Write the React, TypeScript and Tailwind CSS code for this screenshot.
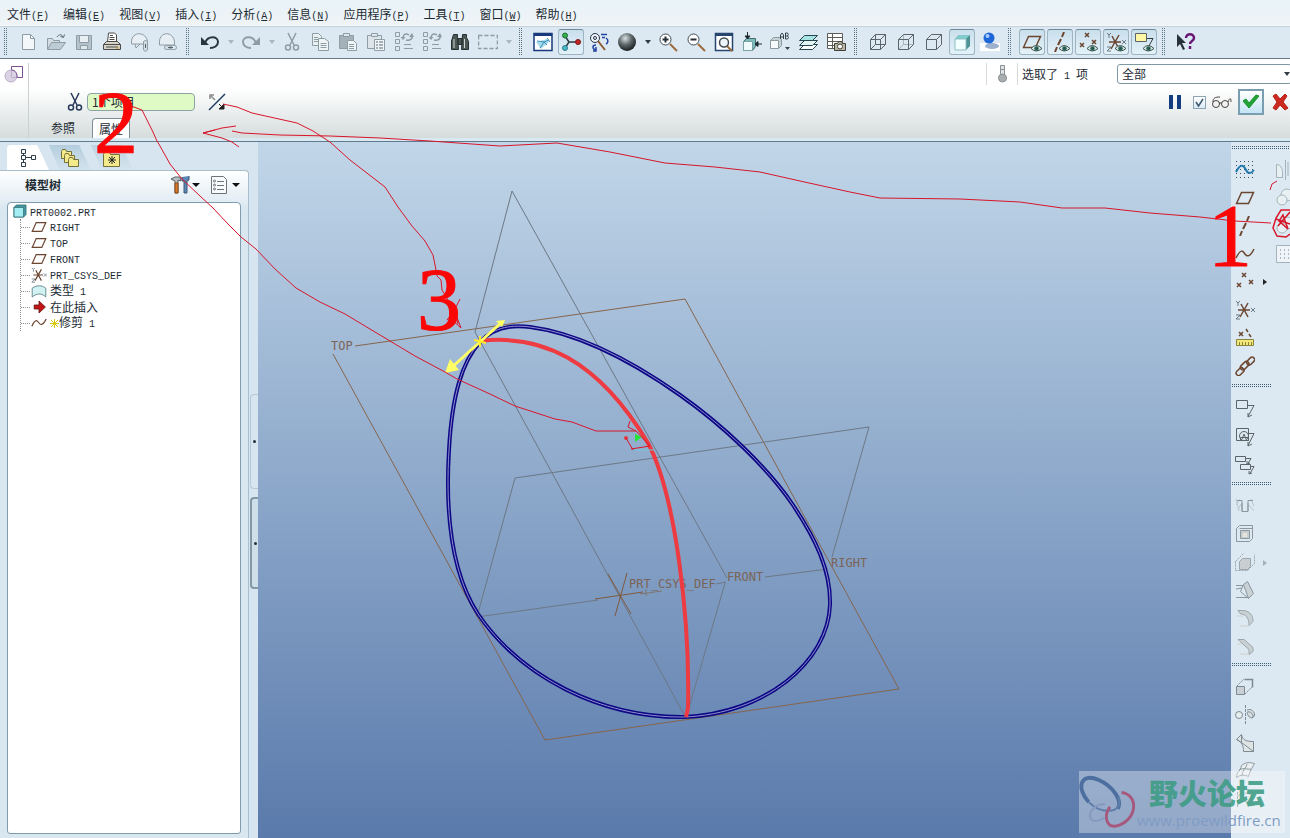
import type { ReactNode } from 'react'
import clsx from 'clsx'

const LINE = '#5b6468'
const BROWN = '#6b4630'
const GREY = '#8e9ca4'

// latin runs are half as wide as the CJK glyphs, like the system's bitmap font
function Mixed({ text }: { text: string }) {
  return (
    <span className="whitespace-pre">
      {text.split(/([\x20-\x7e]+)/).map((part, i) =>
        i % 2 ? <span key={i} className="font-['Liberation_Mono','DejaVu_Sans_Mono',monospace] text-[10px]">{part}</span> : part
      )}
    </span>
  )
}

function Icon({ children, color = LINE, fill = 'none', size = 'size-5' }: { children: ReactNode; color?: string; fill?: string; size?: string }) {
  return (
    <svg viewBox="0 0 20 20" className={clsx(size, 'shrink-0')} fill={fill} stroke={color} strokeWidth="1" aria-hidden="true">
      {children}
    </svg>
  )
}

function Tool({ label, pressed, children }: { label: string; pressed?: boolean; children: ReactNode }) {
  return (
    <button
      type="button"
      aria-label={label}
      aria-pressed={pressed}
      className={clsx(
        'mx-px flex size-[26px] shrink-0 items-center justify-center rounded-[3px]',
        pressed && 'border border-[#9db4c2] border-t-[#6f8a99] bg-linear-to-b from-[#c9dfec] to-[#e4f1f8]'
      )}
    >
      {children}
    </button>
  )
}

function Grip() {
  return (
    <div className="w-3.5 shrink-0 pl-1">
      <div className="h-7 w-[3px] bg-[conic-gradient(transparent_75%,#5b7280_75%)] bg-size-[2px_2px]" />
    </div>
  )
}

function HGrip({ wide }: { wide?: boolean }) {
  return (
    <div className="h-3.5 pt-1 pl-px">
      <div className={clsx('h-[3px] bg-[conic-gradient(transparent_75%,#3f5c70_75%)] bg-size-[2px_2px]', wide ? 'w-full' : 'w-10')} />
    </div>
  )
}

function Drop({ label, dark }: { label: string; dark?: boolean }) {
  return (
    <button type="button" aria-label={label} className="flex h-[26px] w-[13px] shrink-0 items-center justify-center">
      <svg viewBox="0 0 6 4" className="h-1 w-1.5"><path d="M0 0h6L3 4z" fill={dark ? '#2f3d46' : '#a9b7c0'} /></svg>
    </button>
  )
}

const Doc = () => <Icon color={GREY}><path d="M4.500 2.500h8l4 4v11h-12z" fill="#f3f7f9" /><path d="M12.500 2.500v4h4" /></Icon>
const Open = () => <Icon color={GREY}><path d="M1.500 17V6.500h5l1 2h6V11" fill="#d3dde3" /><path d="M1.500 17.500l4-7h14l-5 7z" fill="#bccbd4" /><path d="M11 5c2-3 5-3 6 0M14.500 4.500l3 1 1-3" stroke="#5d6c75" /></Icon>
const Save = () => <Icon color={GREY}><path d="M2.500 3.500h15v14h-15z" fill="#b4c2cb" /><path d="M5.500 3.500h9v7h-9z" fill="#e8eff3" /><path d="M6.500 13.500h7v4h-7z" fill="#dfe8ed" /></Icon>
const Printer = () => (
  <Icon color="#4c4a48">
    <path d="M5.500 10l1-9h6l2 2v7" fill="#fff" />
    <path d="M8 3.500h3M7.500 5.500h5M7.500 7.500h5" />
    <path d="M1.500 12.500l3-3h11l3 3v5h-17z" fill="#d8d3c8" />
    <path d="M1.500 12.500h17M4 15h12" />
    <path d="M14 16h3" stroke="#c59a27" />
  </Icon>
)
const MailClip = () => <Icon color={GREY}><path d="M1.500 10c0-11 15-11 16 0v2h-16z" fill="#e8eff4" /><path d="M5 12l1 4 4-4" /><path d="M13.500 17v-7c0-2 4-2 4 0v7c0 3-4 3-4 0z" fill="#d3dce2" /><path d="M15.500 12v4" stroke="#56646d" /></Icon>
const MailLink = () => <Icon color={GREY}><path d="M1.500 10c0-11 14-11 15 0v3h-15z" fill="#e8eff4" /><rect x="6.500" y="13.500" width="7" height="4" rx="2" fill="#d3dce2" /><rect x="11.500" y="13.500" width="7" height="4" rx="2" /><path d="M10 15.500h5" stroke="#56646d" /></Icon>
const Undo = () => <Icon color="#27363f"><path d="M5 11c3-8 13-7 13-1 0 4-4 6-8 6" strokeWidth="2" /><path d="M1 5v8h8z" fill="#27363f" stroke="none" /></Icon>
const Redo = () => <Icon color={GREY}><path d="M15 11c-3-8-13-7-13-1 0 4 4 6 8 6" strokeWidth="2" /><path d="M19 5v8h-8z" fill={GREY} stroke="none" /></Icon>
const Scissors = ({ color = GREY }: { color?: string }) => (
  <Icon color={color}><path d="M6 1l6 12M14 1L8 13" strokeWidth="1.500" /><circle cx="6" cy="15.500" r="2.500" strokeWidth="1.500" /><circle cx="14" cy="15.500" r="2.500" strokeWidth="1.500" /></Icon>
)
const Copy = () => <Icon color={GREY}><path d="M2.500 1.500h6l3 3v9h-9z" fill="#e9f0f4" /><path d="M4 5.500h4M4 7.500h4M4 9.500h4" /><path d="M8.500 6.500h6l4 3v9h-10z" fill="#eff4f7" /><path d="M10.500 11.500h6M10.500 13.500h6M10.500 15.500h6" /></Icon>
const Paste = () => <Icon color={GREY}><path d="M1.500 3.500h14v13h-14z" fill="#a4b1b9" /><path d="M5.500 1.500h6v3h-6z" fill="#dfe7eb" /><path d="M9.500 8.500h6l3 3v7h-9z" fill="#eff4f7" /><path d="M11 12.500h5M11 14.500h5M11 16.500h5" /></Icon>
const PasteList = () => <Icon color={GREY}><path d="M1.500 3.500h14v13h-14z" fill="#dde5ea" /><path d="M5.500 1.500h6v3h-6z" fill="#dfe7eb" /><path d="M8.500 7.500h10v11h-10z" fill="#eff4f7" /><path d="M10 10h2m1 0h4m-7 3h2m1 0h4m-7 3h2m1 0h4" strokeWidth="1.500" /></Icon>
const Regen = () => (
  <Icon color={GREY}>
    <path d="M1.500 .5h4v4h-4zM1.500 7.500h4v4h-4zM1.500 14.500h4v4h-4zM10 12.500h7M10 16.500h9" />
    <path d="M9 6c0-4 3-5 6-3M18 3c1 4-2 6-6 5" strokeWidth="1.500" />
    <path d="M6.500 5h5l-2.500 3zM15 5h5l-2-4z" fill={GREY} stroke="none" />
  </Icon>
)
const Binoculars = () => <Icon color="#26302f" fill="#4c5856"><path d="M3.500 2.500h4v3l1 12h-7V9zM12.500 2.500h4v3l2 4v8h-7zM8 6.500h4v6H8z" /><path d="M4 7v9M14.500 7v9" stroke="#cfd6d4" /></Icon>
const SelectBox = () => <Icon color={GREY}><path d="M.5 3.500h19v13H.5z" strokeWidth="1.500" strokeDasharray="4 2" /></Icon>
const Repaint = () => <Icon color="#163a7c"><path d="M1 1.500h18v17H1z" fill="#fff" strokeWidth="1.500" /><path d="M1 2.500h18" strokeWidth="3" /><path d="M3 10l11-3 2 3-8 7z" fill="#a8dcea" stroke="none" /><path d="M4 9l7 1 3 3M7 16l4-6 5-2M14 6l3 4" stroke="#3c8fb8" /></Icon>
const Spin = () => (
  <Icon color="#2a3a40">
    <path d="M4 4l4 6-4 6M8 10h9" strokeWidth="1.500" />
    <circle cx="4" cy="3.500" r="2.500" fill="#35b04e" stroke="#1c7030" /><circle cx="4" cy="16" r="2.500" fill="#4bb7c5" stroke="#2a7f8c" /><circle cx="17" cy="10" r="2.500" fill="#c32727" stroke="#7c1414" />
  </Icon>
)
const Orient = () => <Icon color="#27304b"><circle cx="6" cy="6" r="4.500" fill="#eef4f8" /><circle cx="6" cy="6" r="1.500" /><path d="M9 9l7 9" stroke="#8d5b32" strokeWidth="2" /><path d="M12 2.500h6M13 5.500h3M17 6c3 2 2 5 0 6M7 13c-4 0-4 4 0 5M7 15v4H4" stroke="#2544a3" strokeWidth="1.500" /></Icon>
const Sphere = () => (
  <Icon>
    <defs><radialGradient id="ball" cx="40%" cy="30%" r="70%"><stop offset="0" stopColor="#d9e1e3" /><stop offset=".5" stopColor="#60696c" /><stop offset="1" stopColor="#1b1f21" /></radialGradient></defs>
    <circle cx="10" cy="10" r="9" fill="url(#ball)" stroke="none" />
  </Icon>
)
const Zoom = ({ plus }: { plus?: boolean }) => <Icon color="#3f4a52"><path d="M12 12l7 7" stroke="#9c6a3c" strokeWidth="2" /><circle cx="7.500" cy="7.500" r="5.500" fill="#fff" /><path d={plus ? 'M4.500 7.500h6M7.500 4.500v6' : 'M4.500 7.500h6'} strokeWidth="2" stroke="#262f38" /></Icon>
const Refit = () => <Icon color="#27456f"><path d="M1.500 1.500h17v17h-17z" fill="#fff" strokeWidth="1.500" /><path d="M1 2.500h18" strokeWidth="3" /><path d="M13 14l5 5" stroke="#9c6a3c" strokeWidth="2" /><circle cx="10" cy="10.500" r="4.500" fill="#eef4f8" stroke="#3f4a52" strokeWidth="1.500" /></Icon>
const Reorient = () => <Icon color="#1f2a30"><path d="M1.500 9.500l3-3h9v8l-3 4h-9z" fill="#7cbcbc" stroke="#456c70" /><path d="M1.500 9.500h9v9h-9z" fill="#effafa" stroke="#7aa0a4" /><path d="M5.500 0v6M3 4l2.500 3L8 4zM20 12h-6M16 9.500L13 12l3 2.500z" fill="#1f2a30" /></Icon>
const Saved = () => (
  <Icon color="#8d9ba0">
    <path d="M.5 8.500l3-3h8v8l-3 3h-8z" fill="#c2d2d5" /><path d="M.5 8.500h8v8h-8z" fill="#f7fbfb" />
    <path d="M10.500 7V3l1.500-2 1.500 2v4m-3-2h3M15.500 1v6h2q2-1.500 0-3 1.500-1.500 0-3zm0 3h2" stroke="#33424a" fill="#dce9f2" /><path d="M15 15h5l-2.500 3z" fill="#33424a" stroke="none" />
  </Icon>
)
const Layers = () => <Icon color="#23454d"><path d="M1.500 17.500l5-5h13l-5 5z" fill="#fff" /><path d="M1.500 13.500l5-5h13l-5 5z" fill="#e2f4f4" /><path d="M1.500 8.500l5-5h13l-5 5z" fill="#a7e3e4" /></Icon>
const ViewMgr = () => <Icon color="#5d5d58"><path d="M1.500 1.500h15v15h-15z" fill="#fff" /><path d="M1.500 5.500h15M6.500 1.500v15M1.500 9.500h15M1.500 13.500h15" /><path d="M8.500 11.500h3l1-2h3l1 2h3v7h-11z" fill="#b7b5a4" stroke="#3f3f38" /><circle cx="14" cy="14.500" r="2.500" fill="#fff" stroke="#3f3f38" /></Icon>
const Wire = ({ inner = LINE }: { inner?: string }) => <Icon><path d="M7.500 2.500v10h10M7.500 12.500l-5 5" stroke={inner} /><path d="M2.500 7.500h10v10h-10zM2.500 7.500l5-5h10v10l-5 5M12.500 7.500l5-5" /></Icon>
const Shaded = () => <Icon color="none"><path d="M3 7l4-4h11v11l-4 4z" fill="#4f9296" /><path d="M3 7l4-4h11l-4 4z" fill="#7fcbcd" /><path d="M3 7h11v11H3z" fill="#f2ffff" stroke="#8cbfc2" /></Icon>
const BlueBall = () => <Icon color="none"><path d="M0 11h20v8H0z" fill="#fff" /><ellipse cx="12" cy="14" rx="7" ry="3" fill="#9db1cf" /><circle cx="9" cy="6" r="5.500" fill="#1f67d8" /><circle cx="7.500" cy="4" r="2" fill="#a9ccff" /></Icon>
const Eye = () => <g><path d="M9 16.500q5-6 11 0-6 5-11 0z" fill="#d5e8e2" stroke="#40544f" /><circle cx="14.500" cy="16.500" r="2.200" fill="#285c55" stroke="none" /></g>
const Plane = ({ eye, size }: { eye?: boolean; size?: string }) => <Icon color={BROWN} size={size}><path d="M1.500 15.500l5-11h12l-5 11z" strokeWidth="1.500" />{eye && <Eye />}</Icon>
const Axis = ({ eye }: { eye?: boolean }) => <Icon color={BROWN}><path d="M14 0l-2 5M11 7l-3 6M7 15l-2 5" strokeWidth="2" />{eye && <Eye />}</Icon>
const Points = ({ eye }: { eye?: boolean }) => <Icon color={BROWN}><path d="M7 1l4 4m0-4L7 5M2 11l4 4m0-4l-4 4M14 8l4 4m0-4l-4 4" strokeWidth="1.500" />{eye && <Eye />}</Icon>
const Csys = ({ eye, size }: { eye?: boolean; size?: string }) => (
  <Icon color={BROWN} size={size}>
    <path d="M3 10h12M6 4l7 13M13 3L5 17" strokeWidth="1.500" />
    <path d="M1 1l2 2 2-2M3 3v3M1 15h4l-4 4h4M16 8l4 4m0-4l-4 4" stroke="#6c7c86" />{eye && <Eye />}
  </Icon>
)
const Note = ({ eye }: { eye?: boolean }) => <Icon><path d="M1.500 1.500h11v8h-11z" fill={eye ? '#fdf6a5' : 'none'} /><path d="M13 6.500h6l-6 11M13 14v4l4-2" stroke={eye ? '#303a40' : LINE} />{eye && <Eye />}</Icon>
const Help = () => <Icon color="none"><path d="M1 2v13l3-3 3 6 2-1-3-6h4z" fill="#27313a" /><path d="M10 6c0-5 8-5 8 0 0 3-4 3-4 6M14 14v3" stroke="#6a1675" strokeWidth="2.500" /></Icon>
const Wave = ({ size }: { size?: string }) => <Icon color={BROWN} size={size}><path d="M1 14c5-10 7-7 9-4s5 3 9-5" strokeWidth="1.500" /></Icon>
const Sketch = () => <Icon color="#2379ad"><path d="M1 1.500h18M1 5.500h18M1 9.500h18M1 13.500h18M1 17.500h18" stroke="#3b4c58" strokeDasharray="1 3" /><path d="M1 12c5-10 8-6 10-2s5 4 8 0" strokeWidth="2" /></Icon>
const Ruler = () => <Icon color={BROWN}><path d="M4 4l4 4m0-4L4 8M11 1l2 3M14 6l2 3" strokeWidth="1.500" /><path d="M1.500 11.500h17v6h-17z" fill="#f1e87a" stroke="#8b8439" /><path d="M4.500 17v-3m3 3v-3m3 3v-3m3 3v-3m3 3v-3" stroke="#8b8439" /></Icon>
const Chain = () => <Icon color={BROWN}><g transform="rotate(-45 10 10)" strokeWidth="1.500"><rect x="-2" y="8" width="9" height="5" rx="2.500" /><rect x="5" y="7" width="10" height="5" rx="2.500" /><rect x="13" y="8" width="9" height="5" rx="2.500" /></g></Icon>

const Stamp = () => <Icon><path d="M1.500 1.500h12v12h-12z" /><circle cx="9" cy="9" r="4.500" /><path d="M7 12l2-5 2 5M5.500 10.500h8v3h-8zM14 6.500h5l-6 12M13 15v4l4-2" /></Icon>
const Notes = () => <Icon><path d="M.5 1.500h10v5h-10zM5.500 9.500h10v5h-10zM11 3.500h5l-3 5M12 6v3l3-1M16 11.500h3l-4 7M14 16v3l3-1" /></Icon>
const Hole = () => <Icon color="#8c979d"><path d="M1 3l3 12M1 9l4-6M3 14l3-6M16 3l3 7M14 9l5 6" stroke="#bbc6cc" /><path d="M2 4.500h5v11h6v-11h5M7 15.500V7m6 8V7" /></Icon>
const Shell = () => <Icon color="#8c979d"><path d="M1.500 4.500l3-3h13v13l-3 3h-13zM4.500 4.500h13" /><path d="M5.500 6.500h9v8h-9z" fill="#c7cfd3" /><path d="M8 9h4v4H8z" fill="#e6e3da" stroke="none" /></Icon>
const Rib = () => <Icon color="#9ba7ad"><path d="M.5 9.500l8-8M.5 9.500v9h12v-9M12.500 18.500l7-7v-9" strokeDasharray="2 1" /><path d="M4.500 9.500l3-3h8v8l-3 3h-8z" fill="#c8ced1" /></Icon>
const Draft = () => <Icon color="#8c979d"><path d="M1 5.500h7M1 17.500h12M1 9l6-1" /><path d="M8.500 4.500l4-3 6 12-5 5z" fill="#c9d1d5" /><path d="M8.500 4.500l-3 7 8 7" /></Icon>
const Round = () => <Icon color="#9ba7ad"><path d="M3 2.500h4c8 0 11 5 11 11l-4 4c0-8-3-11-9-12z" fill="#c9d1d5" /><path d="M2 8h6m6 10H5" stroke="#d3cec6" /></Icon>
const Chamfer = () => <Icon color="#9ba7ad"><path d="M3 3.500h6l9 8v4l-4 3v-5l-9-8z" fill="#c9d1d5" /><path d="M2 8h4m8 10H5" stroke="#d3cec6" /></Icon>
const Extrude = () => <Icon color="#7f8b92"><path d="M1.500 9.500h8v8h-8z" fill="#c9cfd2" /><path d="M2 9l7-7M10 17l7-7" strokeDasharray="2 1" /><path d="M9.500 2.500h8v8" strokeWidth="1.500" /></Icon>
const Revolve = () => <Icon color="#7f8b92"><circle cx="4" cy="10" r="3.500" fill="#e7ecee" /><path d="M10.500 0v20" strokeDasharray="3 1" /><path d="M12 5c4-2 8 2 7.500 5s-4 4-6 1-2-5 1-4 4 3 3 6" fill="#d6dde0" /></Icon>
const Sweep = () => <Icon color="#7f8b92"><path d="M1.500 6.500l5-5c1 6 5 7 12 7v10h-10c0-6-2-10-7-12z" fill="#dfe4e5" /><path d="M6.500 1.500v8l12 9M1.500 6.500l5 3" /></Icon>
const Blend = () => <Icon color="#8c979d"><path d="M1.500 16.500c0-6 4-6 5-12 5-4 8-3 13-2-3 6-4 6-6 13-4-2-8-2-12 1z" fill="#e9eff1" /><path d="M4 9c5-3 8 0 12-1M7 15c0-6 4-7 5-12" /></Icon>
const Boundary = () => <Icon color="#8c979d"><path d="M2.500 3v15M2 16c5-5 9-5 15 1M3 7c5-4 9-4 14 0v10" strokeDasharray="3 1" /></Icon>
const Mirror = () => <Icon color="#a4b3bb"><path d="M2.500 17.500v-13c4 0 6 4 6 8v5zM11.500 0v20M14 2v14" fill="#e8f0f4" /></Icon>
const Merge = () => <Icon color="#a4b3bb"><circle cx="13" cy="7" r="6" fill="#e8f0f4" /><circle cx="8" cy="12" r="5" fill="#e8f0f4" /></Icon>
const Pattern = () => <Icon color="#a4b3bb"><path d="M2.500 1.500h18v17h-18z" fill="#eef4f7" /><path d="M6 6h14M6 10h14M6 14h14" stroke="#6d7f89" strokeDasharray="1 3" /></Icon>

const MENUS = [['文件', 'F'], ['编辑', 'E'], ['视图', 'V'], ['插入', 'I'], ['分析', 'A'], ['信息', 'N'], ['应用程序', 'P'], ['工具', 'T'], ['窗口', 'W'], ['帮助', 'H']]

function MenuBar() {
  return (
    <nav className="flex h-[26px] items-center gap-3.5 border-b border-[#f6fafc] bg-linear-to-b from-[#e8f3f8] to-[#eff3f6] pt-1.5 pl-[7px]">
      {MENUS.map(([name, key]) => (
        <button key={key} type="button" className="flex items-baseline whitespace-nowrap leading-4">
          {name}
          <span className="font-['Liberation_Mono',monospace] text-[10px]">(<u>{key}</u>)</span>
        </button>
      ))}
    </nav>
  )
}

function MainToolbar() {
  return (
    <div role="toolbar" aria-label="主工具栏" className="flex h-[33px] items-center border-b border-[#667b89] border-t border-t-[#c2d0d9] bg-[#dce9f2] pb-px">
      <Grip />
      <Tool label="新建"><Doc /></Tool>
      <Tool label="打开"><Open /></Tool>
      <Tool label="保存"><Save /></Tool>
      <Tool label="打印"><Printer /></Tool>
      <Tool label="发送附件"><MailClip /></Tool>
      <Tool label="发送链接"><MailLink /></Tool>
      <Grip />
      <Tool label="撤消"><Undo /></Tool>
      <Drop label="撤消列表" />
      <Tool label="重做"><Redo /></Tool>
      <Drop label="重做列表" />
      <Tool label="剪切"><Scissors /></Tool>
      <Tool label="复制"><Copy /></Tool>
      <Tool label="粘贴"><Paste /></Tool>
      <Tool label="选择性粘贴"><PasteList /></Tool>
      <Tool label="再生"><Regen /></Tool>
      <Tool label="再生管理器"><Regen /></Tool>
      <Tool label="查找"><Binoculars /></Tool>
      <Tool label="框选"><SelectBox /></Tool>
      <Drop label="框选列表" />
      <Grip />
      <Tool label="重画"><Repaint /></Tool>
      <Tool label="旋转中心" pressed><Spin /></Tool>
      <Tool label="定向模式"><Orient /></Tool>
      <Tool label="外观"><Sphere /></Tool>
      <Drop label="外观列表" dark />
      <Tool label="放大"><Zoom plus /></Tool>
      <Tool label="缩小"><Zoom /></Tool>
      <Tool label="重新调整"><Refit /></Tool>
      <Tool label="重定向"><Reorient /></Tool>
      <Tool label="已保存视图"><Saved /></Tool>
      <Tool label="层"><Layers /></Tool>
      <Tool label="视图管理器"><ViewMgr /></Tool>
      <Grip />
      <Tool label="线框"><Wire /></Tool>
      <Tool label="隐藏线"><Wire inner="#a9b4ba" /></Tool>
      <Tool label="消隐"><Wire inner="none" /></Tool>
      <Tool label="着色" pressed><Shaded /></Tool>
      <Tool label="增强真实感"><BlueBall /></Tool>
      <Grip />
      <Tool label="平面显示" pressed><Plane eye /></Tool>
      <Tool label="轴显示" pressed><Axis eye /></Tool>
      <Tool label="点显示" pressed><Points eye /></Tool>
      <Tool label="坐标系显示" pressed><Csys eye /></Tool>
      <Tool label="注释显示" pressed><Note eye /></Tool>
      <Grip />
      <Tool label="上下文帮助"><Help /></Tool>
    </div>
  )
}

function Dashboard() {
  return (
    <div className="flex h-[83px] justify-between border-b border-[#5f7b8c] bg-linear-to-b from-white from-35% to-[#d3dada] shadow-[inset_0_-3px_0_#d8e9f1]">
      <div className="flex">
        <div className="my-1 w-[29px] border-r border-[#c9cfd3] pt-0.5 pl-1">
          <Icon color="#7d4c93"><path d="M7.500 1.500h11v11h-11z" /><circle cx="7" cy="11" r="6" fill="#cfc8dc" fillOpacity=".8" stroke="#b7aeca" /><path d="M7.500 5c4 0 6 4 5.500 7.500" /></Icon>
        </div>
        <div className="flex flex-col gap-1.5 pt-[33px]">
          <div className="flex h-5 items-center">
            <label htmlFor="trim" aria-label="修剪曲线" className="ml-9"><Scissors color="#27395a" /></label>
            <input id="trim" defaultValue="1个项目" className="ml-0.5 h-[18px] w-[108px] rounded-[4px] border border-[#8ca3a6] bg-[#e0fac5] px-1 text-[12px] outline-none" />
            <button type="button" aria-label="反向" className="ml-3"><Icon color="#1d3a63"><path d="M2 18L18 2" strokeWidth="1.500" /><path d="M8 8L4 4M3 7V3h4" stroke="#8b8b8b" strokeWidth="1.500" /><path d="M12 12l3 3M17 12v5h-5z" fill="#222" stroke="#222" /></Icon></button>
          </div>
          <div className="flex h-5 gap-3 pl-[17px] text-[12px]">
            <button type="button" className="w-[34px] whitespace-nowrap">参照</button>
            <button type="button" className="w-[38px] rounded-t-[4px] border border-b-0 border-[#7b8f97] bg-white whitespace-nowrap">属性</button>
          </div>
        </div>
      </div>
      <div className="flex flex-col">
        <div className="flex h-[30px] items-center">
          <div className="flex h-[22px] w-8 items-center justify-center border-x border-[#d5dadd]">
            <Icon color="#8b9094"><path d="M8.500 1.500h4v4h-4zM8.500 5.500h4v5h-4z" fill="#dfe3e5" /><circle cx="10.500" cy="14" r="4" fill="#a9aeb1" /></Icon>
          </div>
          <label htmlFor="filter" className="ml-1 w-[95px]"><Mixed text="选取了 1 项" /></label>
          <select id="filter" className="h-5 w-[175px] appearance-none rounded-[3px] border border-[#7f98a6] bg-white px-1 text-[12px]">
            <option>全部</option>
          </select>
          <svg viewBox="0 0 6 4" className="-ml-2 h-1 w-1.5" aria-hidden="true"><path d="M0 0h6L3 4z" fill="#2f3d46" /></svg>
        </div>
        <div className="flex h-[26px] items-center justify-end">
          <button type="button" aria-label="暂停" className="flex w-4 gap-1 pl-0.5"><i className="h-3.5 w-1 bg-[#143c80]" /><i className="h-3.5 w-1 bg-[#143c80]" /></button>
          <input type="checkbox" defaultChecked aria-label="预览" className="ml-2.5 size-[13px] appearance-none border border-[#8ea5b3] bg-[linear-gradient(#fff,#dcebf5)]" />
          <svg viewBox="0 0 13 13" className="pointer-events-none mr-1.5 -ml-[13px] size-[13px]" fill="none" aria-hidden="true"><path d="M3 6l2.500 4L10 3" stroke="#3e5a70" strokeWidth="1.500" /></svg>
          <Icon color="#4a4340"><circle cx="4" cy="12" r="3.500" /><circle cx="13" cy="12" r="3.500" /><path d="M7 11h3M1 10c0-4 2-5 7-5M16 10c2-5 3-4 3 0" /></Icon>
          <button type="button" aria-label="确定" className="ml-1.5 flex size-[26px] items-center justify-center border-2 border-[#7b9db0] bg-linear-to-b from-white to-[#c3e3f4]"><Icon color="#17912b"><path d="M2 9l6 7L18 4l-3-1-7 8-3-4z" fill="#21a336" /></Icon></button>
          <button type="button" aria-label="取消" className="ml-1.5 w-5"><Icon color="#b51f16"><path d="M3 4l3-2 4 5 5-5 2 2-4 6 5 6-3 2-5-5-4 5-3-2 4-6z" fill="#cc2a1f" /></Icon></button>
        </div>
      </div>
    </div>
  )
}

const TREE = [
  { icon: <Plane size="size-4" />, text: 'RIGHT' },
  { icon: <Plane size="size-4" />, text: 'TOP' },
  { icon: <Plane size="size-4" />, text: 'FRONT' },
  { icon: <Csys size="size-4" />, text: 'PRT_CSYS_DEF' },
  { icon: <Icon size="size-4" color="#4c777b"><path d="M1.500 17.500V6.500c6-4 12-4 17 0v11c-5-5-11-5-17 0z" fill="#d1f1f2" /></Icon>, text: '类型 1' },
  { icon: <Icon size="size-4" color="#5b1512"><path d="M4 7.500h6v-5l8 7.500-8 7.500v-5H4z" fill="#c41414" /></Icon>, text: '在此插入' },
  { icon: <Wave size="size-4" />, text: '修剪 1', flag: true }
]

function TreePanel() {
  return (
    <aside className="flex w-[258px] shrink-0 bg-[#d6e5ef]">
      <div className="flex min-w-0 flex-1 flex-col pt-[3px]">
        <div role="tablist" className="flex pl-[7px]">
          <button role="tab" aria-selected="true" aria-label="模型树" type="button" className="flex h-[25px] w-[42px] items-center justify-center rounded-tl-[4px] bg-white [clip-path:polygon(0_0,72%_0,100%_100%,0_100%)]">
            <Icon color="#2c3d49"><path d="M3.500 1.500h4v4h-4zM3.500 7.500h4v4h-4zM3.500 14.500h4v4h-4zM13.500 7.500h4v4h-4zM5.500 5.500v2M7.500 9.500h6M5.500 12v2" /></Icon>
          </button>
          <button role="tab" aria-selected="false" aria-label="文件夹" type="button" className="flex h-[25px] w-[42px] items-center justify-center bg-linear-to-b from-[#b4cddd] to-[#d3e3ed] [clip-path:polygon(0_0,72%_0,100%_100%,25%_100%)]">
            <Icon color="#75703a" fill="#f4ea8c"><path d="M1.500 3.500l1-2h3l1 2h5v7h-10z" /><path d="M4.500 7.500l1-2h3l1 2h5v7h-10z" /><path d="M8.500 11.500l1-2h3l1 2h5v7h-10z" /></Icon>
          </button>
          <button role="tab" aria-selected="false" aria-label="收藏夹" type="button" className="flex h-[25px] w-[42px] items-center justify-center bg-linear-to-b from-[#bdd3e1] to-[#d5e4ee] [clip-path:polygon(0_0,72%_0,100%_100%,25%_100%)]">
            <Icon color="#75703a"><path d="M1.500 6.500l1-3h5l1 3h9v12h-16z" fill="#f4ea8c" /><path d="M10 8v8M6 12h8M7 9l6 6m0-6l-6 6" stroke="#222" /></Icon>
          </button>
        </div>
        <div className="flex flex-1 flex-col rounded-tr-[4px] border-t border-r border-[#a9bfcd] bg-linear-to-b from-white to-[#d9e7f0] to-[40px] pb-1 pl-[7px]">
          <div className="flex h-[31px] items-center pb-1">
            <h2 className="w-[163px] pl-[18px] font-bold">模型树</h2>
            <button type="button" aria-label="设置" className="flex w-10 items-center gap-0.5">
              <Icon><path d="M1 4l4-2h5l1 4-3-1v13H5V6z" fill="#b8c0c4" stroke="#566067" /><path d="M5 8h3v10H5z" fill="#d87b2a" stroke="#8a4b18" /><path d="M12 2v4h2v12h3V6l2-1V1" fill="#5d87b5" stroke="#3a5876" /></Icon>
              <svg viewBox="0 0 8 4" className="h-1 w-2"><path d="M0 0h8L4 4z" fill="#111" /></svg>
            </button>
            <button type="button" aria-label="显示" className="flex items-center gap-0.5">
              <Icon color="#6c7478"><path d="M1.500 1.500h12l3 3v14h-15z" fill="#f8fafb" /><circle cx="4.500" cy="6" r="1" /><circle cx="4.500" cy="10" r="1" /><circle cx="4.500" cy="14" r="1" /><path d="M7 6.500h7M7 10.500h7M7 14.500h7" /></Icon>
              <svg viewBox="0 0 8 4" className="h-1 w-2"><path d="M0 0h8L4 4z" fill="#111" /></svg>
            </button>
          </div>
          <div className="mr-[7px] flex-1 rounded-t-[4px] rounded-b-[3px] border border-[#7e9cae] bg-white pl-1">
            <div className="flex h-4 items-center gap-0.5">
              <Icon size="size-4" color="#276b72"><path d="M2.500 5.500l3-3h12v12l-3 3h-12z" fill="#4b9aa2" /><path d="M2.500 5.500h12v12h-12z" fill="#a4edf2" /></Icon>
              <Mixed text="PRT0002.PRT" />
            </div>
            <ul className="ml-2 border-l border-dotted border-[#8c9196]">
              {TREE.map(row => (
                <li key={row.text} className="flex h-4 items-center leading-4">
                  <span className="mr-px w-[9px] border-t border-dotted border-[#8c9196]" />
                  {row.icon}
                  <span className="flex items-center pl-[3px]">
                    {row.flag && <svg viewBox="0 0 9 9" className="size-[9px]" stroke="#d9c80c"><path d="M4.500 0v9M0 4.500h9M1 1l7 7M8 1L1 8" /></svg>}
                    <Mixed text={row.text} />
                  </span>
                </li>
              ))}
            </ul>
          </div>
        </div>
      </div>
      <div className="flex w-[9px] flex-col gap-2 pt-[252px] pl-px">
        <button type="button" aria-label="折叠" className="flex h-[95px] items-center justify-center rounded-l-[4px] border border-r-0 border-[#b8c9d4]"><i className="size-[3px] rounded-full bg-[#22323c]" /></button>
        <button type="button" aria-label="调整宽度" className="flex h-[92px] items-center justify-center rounded-l-[4px] border-2 border-r-0 border-[#8499a6] bg-[#cfdfea]"><i className="size-[3px] rounded-full bg-[#22323c]" /></button>
      </div>
    </aside>
  )
}

const EGG = 'M480 342C492 329 508 324 530 327C585 334 640 367 680 395C724 426 768 468 793 505C815 538 831 570 830 605C828 662 765 714 684 717C600 718 520 676 478 614C448 568 446 500 449 450C452 395 462 362 480 342Z'

function Viewport() {
  return (
    <main className="min-w-0 flex-1 bg-linear-to-b from-[#c1d6e8] to-[#5a7aab]">
      <svg viewBox="258 142 973 696" preserveAspectRatio="xMinYMin slice" className="h-full w-full" fill="none" strokeWidth="1">
        <path d="M355 346L685 299L899 689L545 740L333 354" stroke="#85654d" />
        <path d="M512 191L475 332L686 718L725 583M727 578L512 191" stroke="#6c7885" />
        <path d="M832 557L869 427L515 478L477 617L598 600M716 584L726 582M765 577L828 569" stroke="#6c7885" />
        <path d="M595 599L643 592M608 574L631 614M627 573L615 616" stroke="#80593f" />
        <path d="M640 594L662 591M646 589v7" stroke="#7c7570" />
        <g className="font-['DejaVu_Sans_Mono',monospace] text-[12px]" fill="#7b6457">
          <text x="331" y="350">TOP</text>
          <text x="629" y="588">PRT_CSYS_DEF</text>
          <text x="727" y="581">FRONT</text>
          <text x="831" y="567">RIGHT</text>
        </g>
        <path d={EGG} stroke="#0c0784" strokeWidth="4" />
        <path d={EGG} stroke="#8f8fd0" />
        <path d="M480 341C540 334 597 358 648 443C676 496 690 620 688 708L686 717" stroke="#ee3b41" strokeWidth="4" strokeLinejoin="round" />
        <path d="M450 369L502 322" stroke="#ffff66" strokeWidth="3" />
        <path d="M445 373L450 359L459 370ZM505 320L496 321L502 327Z" fill="#ffff66" />
        <path d="M474 340L486 343M480 336v11" stroke="#ffe92b" strokeWidth="2" />
        <path d="M634 450h20" stroke="#74c7dc" />
        <path d="M635 434L642 437L635 442Z" fill="#25e53b" />
        <circle cx="626" cy="438" r="2" fill="#e33b3f" />
      </svg>
    </main>
  )
}

function FeatureToolbar() {
  return (
    <div role="toolbar" aria-label="特征工具栏" className="w-[59px] shrink-0 overflow-hidden bg-[#dce9f2]">
      <HGrip wide />
      <div className="flex">
        <div className="flex w-7 shrink-0 flex-col gap-0.5 pt-px">
          <Tool label="草绘"><Sketch /></Tool>
          <Tool label="平面"><Plane /></Tool>
          <Tool label="轴"><Axis /></Tool>
          <Tool label="曲线"><Wave /></Tool>
          <Tool label="点"><Points /></Tool>
          <Tool label="坐标系"><Csys /></Tool>
          <Tool label="分析"><Ruler /></Tool>
          <Tool label="参照"><Chain /></Tool>
        </div>
        <button type="button" aria-label="点类型" className="mt-[112px] flex h-7 w-[11px] shrink-0 items-center justify-center"><svg viewBox="0 0 4 6" className="h-1.5 w-1"><path d="M0 0v6l4-3z" fill="#222" /></svg></button>
        <div className="flex w-7 shrink-0 flex-col gap-0.5 pt-px">
          <Tool label="镜像"><Mirror /></Tool>
          <Tool label="合并"><Merge /></Tool>
          <Tool label="修剪"><Merge /></Tool>
          <Tool label="阵列"><Pattern /></Tool>
        </div>
      </div>
      <div className="h-px" />
      <HGrip />
      <div className="flex w-7 flex-col gap-0.5 pt-0.5">
        <Tool label="注释"><Note /></Tool>
        <Tool label="图像注释"><Stamp /></Tool>
        <Tool label="多重注释"><Notes /></Tool>
      </div>
      <HGrip />
      <div className="flex pt-px">
        <div className="flex w-7 flex-col gap-0.5">
          <Tool label="孔"><Hole /></Tool>
          <Tool label="壳"><Shell /></Tool>
          <Tool label="筋"><Rib /></Tool>
          <Tool label="拔模"><Draft /></Tool>
          <Tool label="倒圆角"><Round /></Tool>
          <Tool label="倒角"><Chamfer /></Tool>
        </div>
        <button type="button" aria-label="筋类型" className="mt-14 flex h-7 w-[11px] items-center justify-center"><svg viewBox="0 0 4 6" className="h-1.5 w-1"><path d="M0 0v6l4-3z" fill="#a2b0b8" /></svg></button>
      </div>
      <HGrip />
      <div className="flex w-7 flex-col gap-0.5 pt-px">
        <Tool label="拉伸"><Extrude /></Tool>
        <Tool label="旋转"><Revolve /></Tool>
        <Tool label="扫描"><Sweep /></Tool>
        <Tool label="边界混合"><Blend /></Tool>
        <Tool label="造型"><Boundary /></Tool>
      </div>
    </div>
  )
}

function Watermark() {
  return (
    <div className="absolute right-[5px] bottom-[5px] flex h-[62px] w-[206px] items-center bg-white/35">
      <svg viewBox="0 0 60 62" className="h-[62px] w-[58px] shrink-0" fill="none" opacity=".85">
        <path d="M10 31C-3 17 1 0 20 8C36 15 45 30 40 38" stroke="#3f6598" strokeWidth="4" />
        <path d="M10 31C17 38 27 42 37 39C41 37 43 32 41 26" stroke="#5577a4" strokeWidth="2" />
        <path d="M44 21C63 24 60 51 38 56C27 57 26 44 32 36" stroke="#ab4a70" strokeWidth="3" />
        <path d="M27 33C14 33 7 46 14 50C18 52 22 50 26 47" stroke="#8497bd" strokeWidth="2" />
      </svg>
      <div className="flex flex-col whitespace-nowrap">
        <span className="pl-3 font-['Noto_Sans_CJK_SC',sans-serif] text-[29px] leading-9 font-black text-[#3c9c83]/90">野火论坛</span>
        <span className="font-['Open_Sans','Noto_Sans',sans-serif] text-[15px] leading-5 text-[#7f9cc4]">www.proewildfire.cn</span>
      </div>
    </div>
  )
}

// freehand marker strokes and step numbers on top of the whole window
function Markup() {
  return (
    <svg viewBox="0 0 1290 838" className="pointer-events-none absolute top-0 left-0 h-[838px] w-[1290px]" fill="none" stroke="#d8162a">
      <path d="M1271 223L1235 221L1200 217L1150 213L1105 208L1062 208L1020 202L960 199L880 198L850 192L800 181L760 172L715 167L665 163L610 152L557 143L500 146L430 141L380 138L330 136L280 135L242 133L232 131" />
      <path d="M236 126L222 128L203 133L222 138L232 142L239 147M203 133L215 130" />
      <path d="M131 106L142 110L152 130L157 141L160 146L170 164L182 179L200 196L213 208L228 224L241 237L256 249L275 269L296 288L320 302L345 314L370 329L395 344L415 356L445 372L457 379L490 394L515 406L555 419L572 422L596 431L636 431" />
      <path d="M636 431L628 427L630 421M636 431L650 446L631 449M626 438L633 450" />
      <path d="M223 104L237 107L252 113L270 117L297 123L313 131L330 142L350 160L385 187L398 207L412 226L425 241L433 255L436 270L437 276L441 280L442 290L448 300L455 312L461 328L450 318M460 299L455 309L447 320M455 312L458 324" />
      <path d="M1270 190L1272 184L1277 181" />
      <path d="M1290 210L1281 210L1276 218L1273 228L1277 236L1286 237L1290 234M1276 219L1290 224M1278 226L1290 212M1283 215L1288 229L1279 221Z" strokeWidth="1.500" />
      <g className="font-['Liberation_Serif',serif] text-[88px]" fill="#fb0606" stroke="#fb0606">
        <text x="1208" y="265">1</text>
        <text x="94" y="152">2</text>
        <text x="417" y="329">3</text>
      </g>
    </svg>
  )
}

export default function App() {
  return (
    <div className="relative flex min-h-screen flex-col overflow-hidden bg-[#dce9f2] font-['Noto_Sans_CJK_SC',sans-serif] text-[12px] text-[#1d2b33]">
      <MenuBar />
      <MainToolbar />
      <Dashboard />
      <div className="relative flex flex-1">
        <TreePanel />
        <Viewport />
        <FeatureToolbar />
        <Watermark />
      </div>
      <Markup />
    </div>
  )
}
